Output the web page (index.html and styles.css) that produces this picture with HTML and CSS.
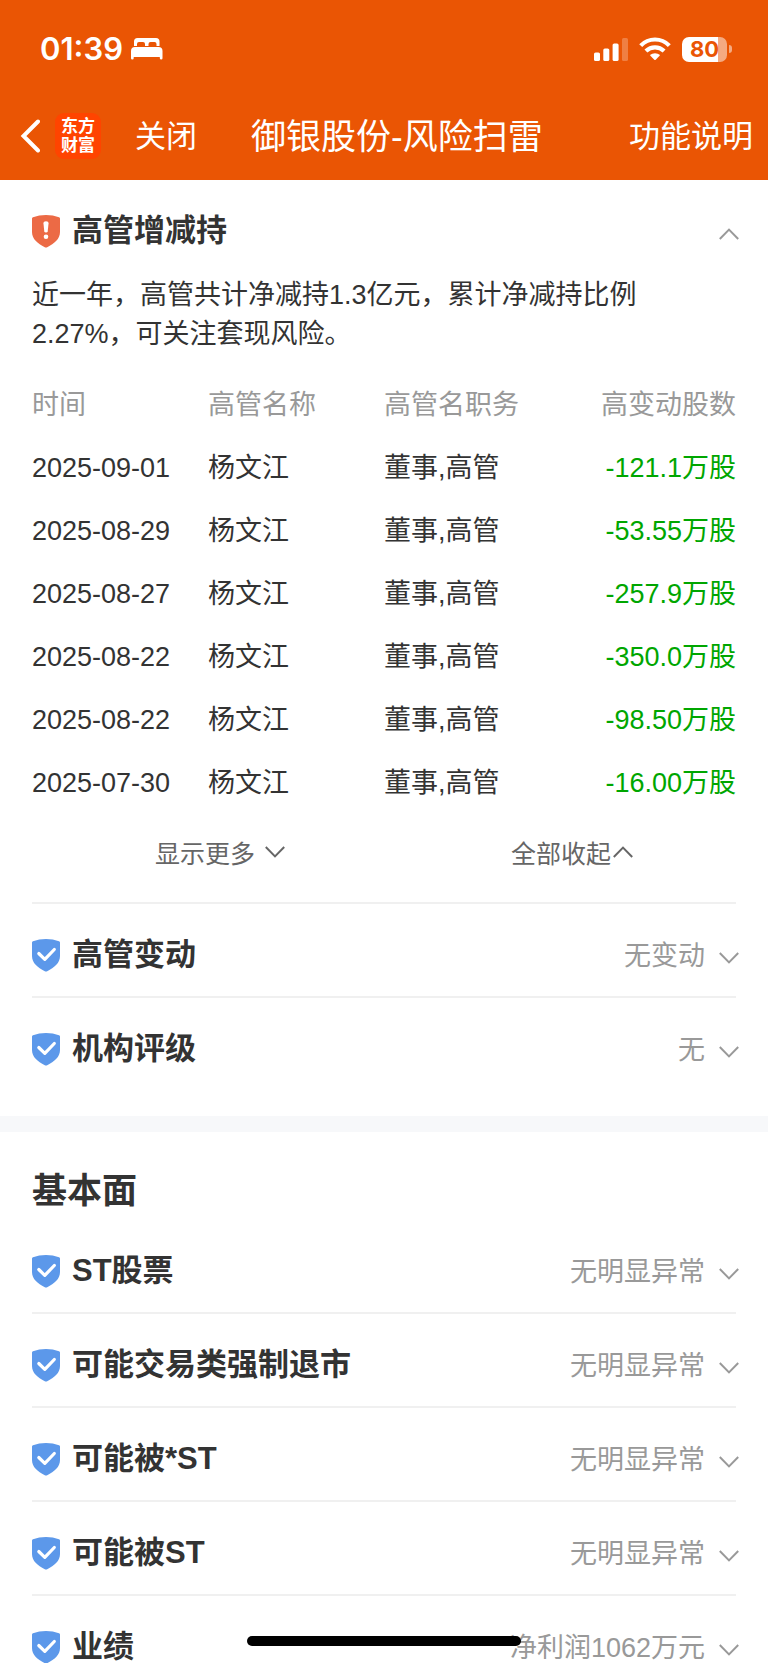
FILE: index.html
```html
<!DOCTYPE html>
<html lang="zh-CN">
<head>
<meta charset="utf-8">
<meta name="viewport" content="width=device-width, initial-scale=1">
<title>御银股份-风险扫雷</title>
<link rel="stylesheet" href="styles.css">
</head>
<body>
<svg class="sprite" aria-hidden="true">
  <symbol id="shield-ok" viewBox="0 0 28 33">
    <path fill="#5c98ea" d="M0 3.600Q0 2.600 1 2.300Q7 0 14 0Q21 0 27 2.300Q28 2.600 28 3.600V17C28 24 22.500 28.500 15.200 32.200Q14 32.900 12.800 32.200C5.500 28.500 0 24 0 17Z"/>
    <path fill="none" stroke="#fff" stroke-width="3.200" stroke-linecap="round" stroke-linejoin="round" d="M6.800 14.500L12.800 20.300L22.300 10.500"/>
  </symbol>
  <symbol id="shield-alert" viewBox="0 0 28 33">
    <path fill="#ec6a45" d="M0 3.600Q0 2.600 1 2.300Q7 0 14 0Q21 0 27 2.300Q28 2.600 28 3.600V17C28 24 22.500 28.500 15.200 32.200Q14 32.900 12.800 32.200C5.500 28.500 0 24 0 17Z"/>
    <path fill="#fff" d="M11.400 8Q11.400 6.200 14 6.200Q16.600 6.200 16.600 8L15.700 16.300Q15.500 17.600 14 17.600Q12.500 17.600 12.300 16.300Z"/>
    <circle cx="14" cy="21.800" r="2.300" fill="#fff"/>
  </symbol>
  <symbol id="chevron-down" viewBox="0 0 20 12">
    <path fill="none" stroke="currentColor" stroke-width="2" d="M.800 1L10 10.400L19.200 1"/>
  </symbol>
  <symbol id="chevron-up" viewBox="0 0 20 12">
    <path fill="none" stroke="currentColor" stroke-width="2" d="M.800 11L10 1.600L19.200 11"/>
  </symbol>
</svg>

<div class="app">
  <header class="header">
    <div class="status">
      <span class="time">01:39</span>
      <svg class="bed" viewBox="0 0 32 22" aria-hidden="true">
        <path fill="#fff" d="M3 8V3.500Q3 0 6.500 0H25Q28.500 0 28.500 3.500V8H25.500V6Q25.500 4 23.500 4H19.500Q17.500 4 17.500 6V8H14V6Q14 4 12 4H8Q6 4 6 6V8Z"/>
        <path fill="#fff" d="M0 13Q0 9 4 9H27.500Q31.500 9 31.500 13V20.200Q31.500 21.500 30.200 21.500Q28.800 21.500 28.800 20.200V19H2.700V20.200Q2.700 21.500 1.300 21.500Q0 21.500 0 20.200Z"/>
      </svg>
      <div class="indicators">
        <svg class="signal" viewBox="0 0 34 23" aria-hidden="true">
          <g fill="#fff">
            <rect x="0" y="14.500" width="6" height="8.500" rx="1.600"/>
            <rect x="9.300" y="10.500" width="6" height="12.500" rx="1.600"/>
            <rect x="18.600" y="5.500" width="6" height="17.500" rx="1.600"/>
            <rect x="28" y="0" width="6" height="23" rx="1.600" opacity=".25"/>
          </g>
        </svg>
        <svg class="wifi" viewBox="0 0 32 24" aria-hidden="true">
          <g fill="none" stroke="#fff" stroke-width="4.200">
            <path d="M1.700 8.600Q7.700 2.500 16 2.500Q24.300 2.500 30.300 8.600"/>
            <path d="M6.900 14Q10.800 10.300 16 10.300Q21.200 10.300 25.100 14"/>
          </g>
          <path fill="#fff" d="M16 16.200Q18.900 16.200 20.700 17.700Q21 18.200 20.600 18.700L16.700 22.700Q16 23.400 15.300 22.700L11.400 18.700Q11 18.200 11.300 17.700Q13.100 16.200 16 16.200Z"/>
        </svg>
        <div class="battery"><span class="level">80</span><span class="nub"></span></div>
      </div>
    </div>
    <nav class="nav">
      <button class="back" aria-label="返回">
        <svg viewBox="0 0 20 34" aria-hidden="true"><path fill="none" stroke="#fff" stroke-width="4" stroke-linecap="round" stroke-linejoin="miter" d="M18 2.500L3.500 17L18 31.500"/></svg>
      </button>
      <span class="logo">东方<br>财富</span>
      <button class="nav-link">关闭</button>
      <h1 class="title">御银股份-风险扫雷</h1>
      <a class="nav-link help" href="#">功能说明</a>
    </nav>
  </header>

  <main class="content">
    <section class="section">
      <button class="item open" aria-expanded="true">
        <svg class="shield"><use href="#shield-alert"/></svg>
        <span class="name">高管增减持</span>
        <svg class="chevron"><use href="#chevron-up"/></svg>
      </button>
      <p class="summary">近一年，高管共计净减持1.3亿元，累计净减持比例2.27%，可关注套现风险。</p>
      <table class="trades">
        <thead><tr><th>时间</th><th>高管名称</th><th>高管名职务</th><th>高变动股数</th></tr></thead>
        <tbody>
          <tr><td>2025-09-01</td><td>杨文江</td><td>董事,高管</td><td>-121.1万股</td></tr>
          <tr><td>2025-08-29</td><td>杨文江</td><td>董事,高管</td><td>-53.55万股</td></tr>
          <tr><td>2025-08-27</td><td>杨文江</td><td>董事,高管</td><td>-257.9万股</td></tr>
          <tr><td>2025-08-22</td><td>杨文江</td><td>董事,高管</td><td>-350.0万股</td></tr>
          <tr><td>2025-08-22</td><td>杨文江</td><td>董事,高管</td><td>-98.50万股</td></tr>
          <tr><td>2025-07-30</td><td>杨文江</td><td>董事,高管</td><td>-16.00万股</td></tr>
        </tbody>
      </table>
      <div class="actions">
        <button class="more">显示更多<svg class="chevron"><use href="#chevron-down"/></svg></button>
        <button class="fold">全部收起<svg class="chevron"><use href="#chevron-up"/></svg></button>
      </div>
      <button class="item"><svg class="shield"><use href="#shield-ok"/></svg><span class="name">高管变动</span><span class="value">无变动</span><svg class="chevron"><use href="#chevron-down"/></svg></button>
      <button class="item last"><svg class="shield"><use href="#shield-ok"/></svg><span class="name">机构评级</span><span class="value">无</span><svg class="chevron"><use href="#chevron-down"/></svg></button>
    </section>

    <section class="section basics">
      <h2 class="heading">基本面</h2>
      <button class="item"><svg class="shield"><use href="#shield-ok"/></svg><span class="name">ST股票</span><span class="value">无明显异常</span><svg class="chevron"><use href="#chevron-down"/></svg></button>
      <button class="item"><svg class="shield"><use href="#shield-ok"/></svg><span class="name">可能交易类强制退市</span><span class="value">无明显异常</span><svg class="chevron"><use href="#chevron-down"/></svg></button>
      <button class="item"><svg class="shield"><use href="#shield-ok"/></svg><span class="name">可能被*ST</span><span class="value">无明显异常</span><svg class="chevron"><use href="#chevron-down"/></svg></button>
      <button class="item"><svg class="shield"><use href="#shield-ok"/></svg><span class="name">可能被ST</span><span class="value">无明显异常</span><svg class="chevron"><use href="#chevron-down"/></svg></button>
      <button class="item"><svg class="shield"><use href="#shield-ok"/></svg><span class="name">业绩</span><span class="value">净利润1062万元</span><svg class="chevron"><use href="#chevron-down"/></svg></button>
    </section>
  </main>
  <div class="home-bar"></div>
</div>
</body>
</html>
```
FILE: styles.css
```css
* {
  box-sizing: border-box;
}

body {
  margin: 0;
  background: #fff;
  color: #333;
  font-family: "Liberation Sans", "Noto Sans CJK SC", sans-serif;
  font-size: 27px;
}

button {
  margin: 0;
  padding: 0;
  border: 0;
  background: none;
  color: inherit;
  font: inherit;
  text-align: left;
}

svg {
  display: block;
  flex: none;
}

.sprite {
  position: absolute;
  width: 0;
  height: 0;
}

.app {
  display: flex;
  flex-direction: column;
  height: 100vh;
  overflow: hidden;
}

/* Header */

.header {
  flex: none;
  padding-bottom: 6px;
  background: #ea5504;
  color: #fff;
}

.status {
  display: flex;
  align-items: center;
  height: 98px;
  padding: 0 36px 0 40px;
}

.time {
  font: 600 31px/36px Inter, sans-serif;
}

.bed {
  width: 32px;
  height: 22px;
  margin-left: 8px;
}

.indicators {
  display: flex;
  align-items: center;
  gap: 11px;
  margin-left: auto;
}

.signal {
  width: 34px;
  height: 23px;
}

.wifi {
  width: 32px;
  height: 24px;
}

.battery {
  display: flex;
  align-items: center;
  gap: 2px;
}

.level {
  width: 45px;
  border-radius: 7px;
  background: linear-gradient(90deg, #fff 80%, rgba(255, 255, 255, 0.5) 80%);
  color: #ea5504;
  font: 700 22px/25px Inter, sans-serif;
  text-align: center;
}

.nub {
  width: 3px;
  height: 8px;
  border-radius: 0 4px 4px 0;
  background: rgba(255, 255, 255, 0.5);
}

.nav {
  display: flex;
  align-items: center;
  height: 76px;
  padding: 0 15px 0 20px;
}

.back svg {
  width: 20px;
  height: 34px;
}

.logo {
  width: 46px;
  height: 46px;
  margin: 0 34px 0 15px;
  padding-top: 4px;
  border-radius: 9px;
  background: #ff4400;
  font-size: 17px;
  font-weight: 700;
  line-height: 19px;
  text-align: center;
}

.nav-link {
  padding-top: 2px;
  color: #fff;
  font-size: 31px;
  line-height: 40px;
  text-decoration: none;
}

.title {
  margin: 0 auto 0 54px;
  padding-top: 2px;
  font-size: 35px;
  font-weight: 400;
  line-height: 44px;
}

/* Content */

.content {
  flex: 1;
  min-height: 0;
  overflow: hidden;
}

.section {
  padding: 0 32px;
}

.item {
  display: flex;
  align-items: center;
  width: 100%;
  height: 94px;
  padding-top: 10px;
  border-bottom: 2px solid #f0f0f0;
}

.item.open,
.item.last {
  border-bottom-color: transparent;
}

.shield {
  width: 28px;
  height: 33px;
}

.name {
  margin-left: 12px;
  font-size: 31px;
  font-weight: 700;
  line-height: 40px;
}

.chevron {
  width: 20px;
  height: 12px;
}

.item .chevron {
  margin: 6px -3px 0 auto;
  color: #999;
}

.value {
  margin-left: auto;
  padding-top: 2px;
  color: #999;
  line-height: 40px;
}

.item .value + .chevron {
  margin-left: 14px;
}

.summary {
  margin: 0;
  padding: 2px 60px 0 0;
  line-height: 39px;
}

.trades {
  width: 100%;
  margin-top: 19px;
  border-collapse: collapse;
  table-layout: fixed;
}

.trades th,
.trades td {
  height: 63px;
  padding: 0;
  font-weight: 400;
  line-height: 40px;
  text-align: left;
  white-space: nowrap;
}

.trades th {
  color: #999;
}

.trades th:last-child,
.trades td:last-child {
  text-align: right;
}

.trades td:last-child {
  color: #00a600;
}

.actions {
  display: grid;
  grid-template-columns: 1fr 1fr;
  justify-items: center;
  padding: 20px 0 28px;
  border-bottom: 2px solid #f0f0f0;
  color: #666;
  font-size: 25px;
  line-height: 40px;
}

.more,
.fold {
  display: flex;
  align-items: center;
  padding-left: 24px;
}

.more {
  gap: 10px;
}

.fold {
  gap: 2px;
}

.actions .chevron {
  margin-bottom: 4px;
}

.basics {
  border-top: 16px solid #f7f8fa;
}

.item.last {
  margin-bottom: 24px;
}

.heading {
  margin: 0;
  padding: 31px 0 1px;
  font-size: 35px;
  font-weight: 700;
  line-height: 56px;
}

.home-bar {
  position: fixed;
  bottom: 17px;
  left: 50%;
  width: 274px;
  height: 10px;
  margin-left: -137px;
  border-radius: 5px;
  background: #000;
}
```
